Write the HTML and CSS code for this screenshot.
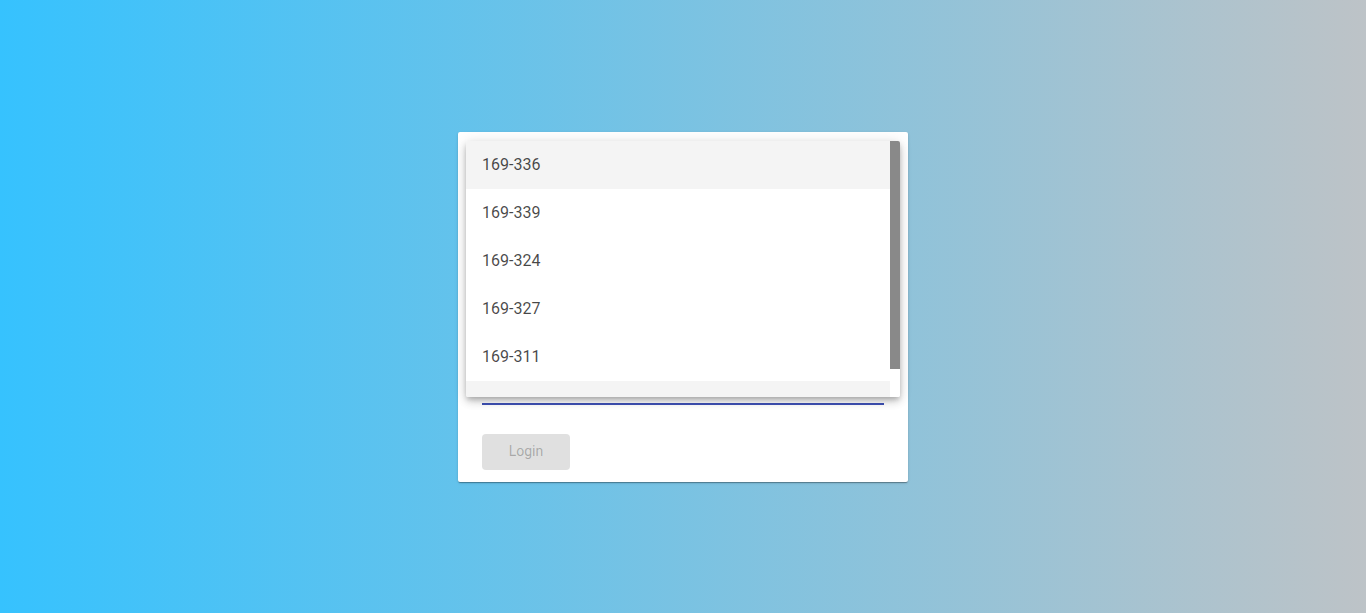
FILE: index.html
```html
<!DOCTYPE html>
<html lang="en">
<head>
<meta charset="utf-8">
<title>Login</title>
<link rel="stylesheet" href="styles.css">
</head>
<body>
<main class="page">
  <section class="card">
    <div class="field">
      <div class="field-input"></div>
      <div class="underline"></div>
    </div>
    <div class="actions">
      <button class="btn" disabled>Login</button>
    </div>
    <div class="panel" role="listbox">
      <ul class="options">
        <li class="option active">169-336</li>
        <li class="option">169-339</li>
        <li class="option">169-324</li>
        <li class="option">169-327</li>
        <li class="option">169-311</li>
        <li class="option active"></li>
      </ul>
      <div class="scroll-track"><div class="scroll-thumb"></div></div>
    </div>
  </section>
</main>
</body>
</html>
```

FILE: styles.css
```css
html, body {
  margin: 0;
  padding: 0;
  height: 100%;
}
body {
  font-family: Roboto, "Liberation Sans", Arial, sans-serif;
  background: linear-gradient(to right, #36c2fe 0%, #bdc3c7 100%);
}
.page {
  height: 100%;
  display: flex;
  align-items: center;
  justify-content: center;
}
.card {
  position: relative;
  width: 450px;
  height: 350px;
  box-sizing: border-box;
  background: #fff;
  border-radius: 2px;
  padding: 24px 24px 12px;
  display: flex;
  flex-direction: column;
  box-shadow: 0 2px 1px -1px rgba(0,0,0,.2), 0 1px 1px 0 rgba(0,0,0,.14), 0 1px 3px 0 rgba(0,0,0,.12);
}
.field {
  display: flex;
  flex-direction: column;
}
.field-input {
  height: 247px;
}
.underline {
  height: 2px;
  background: #3f51b5;
}
.actions {
  margin-top: 29px;
  display: flex;
}
.btn {
  width: 88px;
  height: 36px;
  border: none;
  border-radius: 4px;
  background: #e0e0e0;
  color: rgba(0,0,0,.26);
  font-family: Roboto, "Liberation Sans", Arial, sans-serif;
  font-size: 14px;
  font-weight: 400;
  line-height: 34px;
  padding: 0 0 2px;
}
.panel {
  position: absolute;
  left: 8px;
  top: 9px;
  width: 434px;
  height: 256px;
  background: #fff;
  border-radius: 2px;
  display: flex;
  overflow: hidden;
  box-shadow: 0 3px 5px -1px rgba(0,0,0,.2), 0 5px 8px 0 rgba(0,0,0,.14), 0 1px 14px 0 rgba(0,0,0,.12);
}
.options {
  list-style: none;
  margin: 0;
  padding: 0;
  flex: 1;
  overflow: hidden;
}
.option {
  height: 48px;
  line-height: 48px;
  padding: 0 16px;
  font-size: 16px;
  color: rgba(0,0,0,.72);
}
.option.active {
  background: #f4f4f4;
}
.scroll-track {
  width: 10px;
  background: #fff;
}
.scroll-thumb {
  height: 228px;
  background: #898989;
}
```
